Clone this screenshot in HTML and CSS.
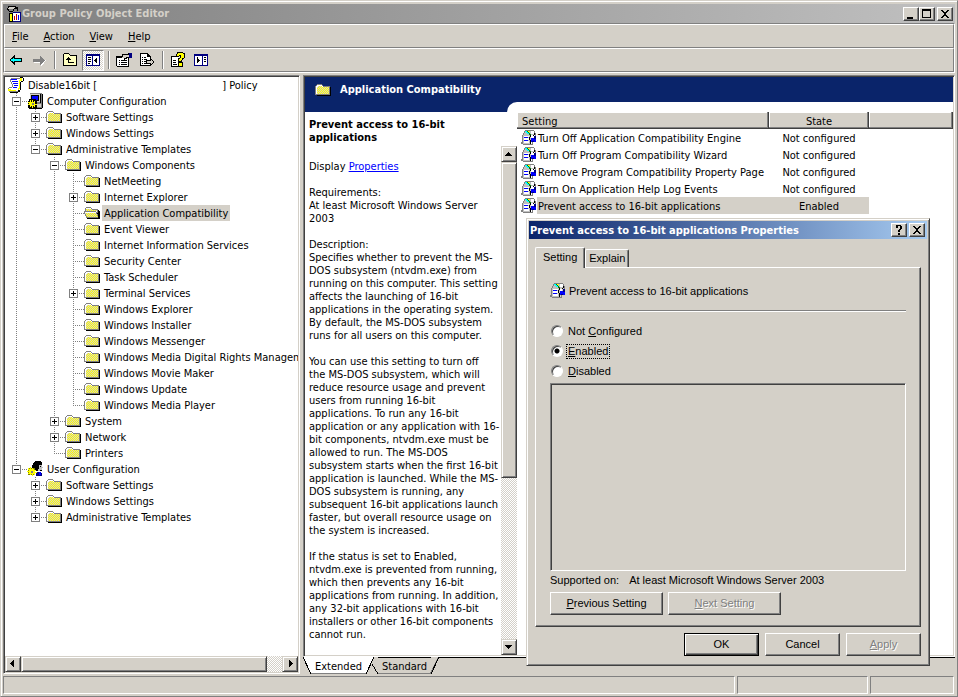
FILE: index.html
```html
<!DOCTYPE html>
<html lang="en">
<head>
    <meta charset="UTF-8">
    <meta name="viewport" content="width=device-width, initial-scale=1.0">
    <title>Group Policy Object Editor</title>
    <link rel="stylesheet" href="styles.css">
</head>
<body>
    <!-- Icon set -->
    <svg class="defs" aria-hidden="true">
        <defs>
            <pattern id="dither" width="2" height="2" patternUnits="userSpaceOnUse">
                <rect width="2" height="2" fill="#d4d0c8"/>
                <rect width="1" height="1" fill="#ff0"/>
                <rect x="1" y="1" width="1" height="1" fill="#ff0"/>
            </pattern>
            <symbol id="folder" viewBox="0 0 16 16">
                <path fill="#000" d="M2 13h14v1H2zM15 5h1v9h-1z"/>
                <path fill="#808080" d="M0 4h1v9H0zM1 3h1v1H1zM2 2h5v1H2zM7 3h1v1H7zM8 4h7v1H8zM14 4h1v9h-1zM1 12h14v1H1z"/>
                <path fill="#fff" d="M1 4h1v8H1zM2 3h5v1H2zM2 4h6v1H2zM2 5h12v1H2z"/>
                <path fill="url(#dither)" d="M2 5h12v7H2zM3 4h4v1H3z"/>
            </symbol>
            <symbol id="folder-open" viewBox="0 0 16 16">
                <path fill="#808080" d="M2 2h5v1H2zM1 3h1v3H1zM7 3h1v1H7zM8 4h6v1H8zM0 6h12v1H0zM13 5h1v3h-1zM0 7h1v2H0zM1 9h1v2H1zM2 11h1v2H2zM3 12h12v1H3zM12 7h1v2h-1zM13 9h1v2h-1z"/>
                <path fill="url(#dither)" d="M2 3h5v3H2zM7 4h1v2H7zM8 5h5v1H8zM1 7h11v2H1zM2 9h11v2H2zM3 11h11v1H3z"/>
                <path fill="#fff" d="M2 3h5v1H2zM1 7h11v1H1z"/>
                <path fill="#000" d="M3 13h13v1H3zM15 6h1v8h-1zM14 5h1v8h-1zM13 8h1v1h-1z"/>
            </symbol>
            <symbol id="policy" viewBox="0 0 16 16">
                <path fill="#808080" d="M3 1h9v1H3zM2 2h1v3H2zM3 5h1v2H3zM4 7h1v3H4zM1 10h3v1H1zM0 11h1v3H0zM1 14h9v1H1z"/>
                <path fill="#fff" d="M3 2h8v3H3zM4 5h7v2H4zM5 7h6v4H5zM1 11h9v3H1z"/>
                <path fill="#00f" d="M3 2h6v1H3zM4 4h6v1H4zM5 6h5v1H5zM6 8h4v1H6zM5 10h4v1H5z"/>
                <path fill="#000" d="M12 0h3v1h-3zM15 1h1v3h-1zM13 4h2v1h-2zM12 5h1v8h-1zM10 13h2v2h-2zM2 15h8v1H2z"/>
                <path fill="#ff0" d="M12 1h2v3h-2zM11 3h1v9h-1zM10 11h1v2h-1zM0 12h3v2H0zM3 13h5v1H3z"/>
            </symbol>
            <symbol id="computer" viewBox="0 0 16 16">
                <path fill="#808080" d="M3 0h12v10H3zM1 10h14v5H1z"/>
                <path fill="#d4d0c8" d="M3 1h10v8H3zM2 11h12v3H2z"/>
                <path fill="#000" d="M4 2h8v6H4zM13 1h1v9h-1zM15 1h1v14h-1zM2 15h13v1H2z"/>
                <path fill="#00f" d="M5 3h6v4H5z"/>
                <path fill="#000" d="M2 6h7v1h1v8H1V8h1z"/>
                <path fill="#ff0" d="M3 7h1v2h1V7h1v2h1V8h1v2H8v1h2v1H8v2H7v-1H6v2H5v-2H4v1H3v-2H1v-1h1v-1H1V9h2z"/>
                <path fill="#808080" d="M5 10h2v2H5z"/>
            </symbol>
            <symbol id="user" viewBox="0 0 16 16">
                <path fill="#000" d="M7 1h1V0h6v1h1v3h-2v1h-1v3h-1v2H6V8H5V4h1V2h1z"/>
                <path fill="#c0c0c0" d="M12 4h3v2h1v1h-1v3h-4V8h1z"/>
                <path fill="#000" d="M13 5h1v1h-1zM13 9h2v1h-2z"/>
                <path fill="#000080" d="M10 11h4v1h1v3H9v-3h1z"/>
                <path fill="#00f" d="M12 11h2v3h-2z"/>
                <path fill="#808000" d="M1 7h7v7H1z"/>
                <path fill="#ff0" d="M1 7h1v1h1V6h1v2h1V7h1v1h1v1h2v1H8v1h2v1H8v2H7v-1H6v2H5v-2H4v1H3v-1H1v-1h1v-1H0v-1h2V9H1z"/>
                <path fill="#808080" d="M4 10h2v2H4z"/>
            </symbol>
            <symbol id="setting" viewBox="0 0 16 16">
                <path fill="#808080" d="M4 0h9v1H4zM13 1h1v2h-1zM3 1h1v2H3zM2 3h1v2H2zM1 5h1v2H1zM0 12h2v2H0zM1 7h1v5H1zM2 14h10v1H2zM14 3h1v3h-1zM11 12h1v2h-1z"/>
                <path fill="#c0c0c0" d="M4 1h9v4H4zM3 3h2v3H3zM2 5h8v9H2z"/>
                <path fill="#fff" d="M10 1h3v3h-3zM3 6h5v1H3zM3 8h5v2H3zM3 11h5v2H3z"/>
                <path fill="#0ff" d="M4 1h2v1H4zM5 2h2v1H5zM6 3h2v1H6z"/>
                <path fill="#008000" d="M6 1h1v1H6zM7 2h1v1H7zM8 3h1v2H8zM9 4h1v1H9z"/>
                <path fill="#ff0" d="M7 1h2v1H7z"/>
                <path fill="#00f" d="M3 7h4v1H3zM3 10h4v1H3z"/>
                <path fill="#000" d="M9 5h1v2H9zM8 7h1v3H8zM9 10h1v4H9zM10 8h1v2h-1zM13 3h1v2h-1zM12 5h1v1h-1z"/>
                <path fill="#00f" d="M10 8h5v4h-5z"/>
                <path fill="#000080" d="M13 6h2v3h-2zM11 11h2v1h-2z"/>
                <path fill="#fff" d="M10 6h2v2h-2z"/>
            </symbol>
            <symbol id="app" viewBox="0 0 16 16">
                <path fill="#000" d="M2 0h8v1h2v4h-1V3H8v2H2V4H1V2h1zM3 5h4v1H3z"/>
                <path fill="#d4d0c8" d="M3 1h6v1H3zM2 2h6v1H2z"/>
                <path fill="#808080" d="M3 3h4v2H3zM4 6h2v2H4z"/>
                <path fill="#000" d="M3 7h4v9H3z"/>
                <path fill="#ff0" d="M4 8h2v7H4z"/>
                <path fill="#fff" d="M7 7h8v8H7z"/>
                <path fill="#000080" d="M7 6h8v1H7zM14 7h1v9h-1zM7 15h8v1H7z"/>
                <path fill="#c00000" d="M8 10h1v4H8zM10 8h1v6h-1z"/>
                <path fill="#00f" d="M12 9h1v5h-1z"/>
            </symbol>
        </defs>
    </svg>

    <div class="window">
        <header class="titlebar">
            <svg class="icon"><use href="#app"/></svg>
            <h1>Group Policy Object Editor</h1>
            <button class="caption" aria-label="Minimize"><svg viewBox="0 0 12 10"><path d="M2 8h6v2H2z"/></svg></button>
            <button class="caption" aria-label="Maximize"><svg viewBox="0 0 12 10"><path fill-rule="evenodd" d="M1 0h9v9H1zM2 2h7v6H2z"/></svg></button>
            <button class="caption close" aria-label="Close"><svg viewBox="0 0 12 10"><path d="M2 1h2v1h1v1h2V2h1V1h2v1H9v1H8v1H7v2h1v1h1v1h1v1H8V8H7V7H5v1H4v1H2V8h1V7h1V6h1V4H4V3H3V2H2z"/></svg></button>
        </header>

        <div class="bars">
            <nav class="menu">
                <button><u>F</u>ile</button>
                <button><u>A</u>ction</button>
                <button><u>V</u>iew</button>
                <button><u>H</u>elp</button>
            </nav>
            <div class="toolbar">
                <button class="tool" aria-label="Back"><svg viewBox="0 0 16 16"><path d="M2 7h1V6h1V5h1V4h1V3h1v3h7v4H7v3H6v-1H5v-1H4v-1H3V9H2z"/><path fill="#0ff" d="M3 8V7h2V6h1v1h7v2H6v1H5V9H3z"/></svg></button>
                <button class="tool" aria-label="Forward"><svg viewBox="0 0 16 16"><path fill="#fff" d="M3 8h7v3H3zM10 12l4-4h1l-4 6h-1z"/><path fill="#808080" d="M2 7h7V4h1v1h1v1h1v1h1v1h1v1h-1v1h-1v1h-1v1h-1v1H9v-3H2z"/></svg></button>
                <span class="sep"></span>
                <button class="tool" aria-label="Up one level"><svg viewBox="0 0 16 16"><path fill="#000" d="M2 1h5v1h1v1h7v11H1V2h1z"/><path fill="#ffffc0" d="M2 2h5v1h1v1h6v9H2z"/><path fill="#000" d="M6 5h1v1h1v1h1v1H7v2h5v1H6V8H4V7h1V6h1z"/></svg></button>
                <button class="tool pressed" aria-label="Show tree"><svg viewBox="0 0 16 16"><path fill="#000080" d="M1 2h14v12H1z"/><path fill="#fff" d="M2 4h5v9H2zM8 4h6v9H8z"/><path fill="#000" d="M3 5h3v1H3zM3 7h3v1H3zM3 9h3v1H3zM3 11h2v1H3zM12 5v6h-1v-1h-1V9H9V8h1V7h1V6z"/></svg></button>
                <span class="sep"></span>
                <button class="tool" aria-label="Properties"><svg viewBox="0 0 16 16"><path d="M0 4h8v1h5v10H1v-1H0z"/><path fill="#fff" d="M1 6h11v8H1z"/><path d="M3 8h1v1H3zM5 8h6v1H5zM3 10h1v1H3zM5 10h6v1H5zM3 12h1v1H3zM5 12h6v1H5z"/><path d="M6 2h6V1h2v5h-3v1H9v1H8V6H5V4h1z"/><path fill="#d4d0c8" d="M7 3h6v2H7zM6 5h4v1H6z"/><path fill="#000080" d="M13 1h3v5h-3z"/></svg></button>
                <button class="tool" aria-label="Export list"><svg viewBox="0 0 16 16"><path d="M1 1h8v1h1v1h1v1h1v10H1z"/><path fill="#fff" d="M2 2h6v3h3v8H2z"/><path d="M8 2h1v2h2v1H8zM3 5h1v1H3zM5 5h2v1H5zM3 7h1v1H3zM5 7h3v1H5zM3 9h1v1H3zM5 9h2v1H5zM3 11h1v1H3zM5 11h3v1H5zM11 6h1v1h1v1h1v1h1v2h-1v1h-1v1h-1v1h-1v-2H7V8h4z"/><path fill="#d4d0c8" d="M8 9h4V8h1v1h1v2h-1v1h-1v-1H8z"/></svg></button>
                <span class="sep"></span>
                <button class="tool" aria-label="Help"><svg viewBox="0 0 16 16"><path d="M1 4h8v11H1z"/><path fill="#fff" d="M2 5h7v9H2z"/><path d="M3 8h3v1H3zM3 10h3v1H3zM3 12h4v1H3zM7 0h6v1h2v5h-1v1h-1v1h-1v2H8V6h2V4H9v1H6V2h1zM8 10h5v5H8z"/><path fill="#ff0" d="M8 1h5v1h1v4h-2v2h-1v1H9V7h1V6h1V3H9v1H7V2h1zM9 11h3v3H9z"/></svg></button>
                <button class="tool" aria-label="Show action pane"><svg viewBox="0 0 16 16"><path fill="#000080" d="M1 2h14v12H1z"/><path fill="#fff" d="M2 4h7v9H2zM10 4h4v9h-4z"/><path fill="#000" d="M11 5h2v1h-2zM11 7h2v1h-2zM11 9h2v1h-2zM4 5v6h1v-1h1V9h1V8H6V7H5V6z"/></svg></button>
            </div>
        </div>

        <main class="main">
            <section class="tree-pane">
                <div class="tree">
                    <div class="row"><svg class="icon"><use href="#policy"/></svg><span class="label root">Disable16bit [<i class="blank"></i>] Policy</span></div>
                    <ul>
                        <li>
                            <div class="row"><button class="exp" aria-label="Collapse"></button><svg class="icon"><use href="#computer"/></svg><span class="label">Computer Configuration</span></div>
                            <ul>
                                <li><div class="row"><button class="exp plus" aria-label="Expand"></button><svg class="icon"><use href="#folder"/></svg><span class="label">Software Settings</span></div></li>
                                <li><div class="row"><button class="exp plus" aria-label="Expand"></button><svg class="icon"><use href="#folder"/></svg><span class="label">Windows Settings</span></div></li>
                                <li>
                                    <div class="row"><button class="exp" aria-label="Collapse"></button><svg class="icon"><use href="#folder"/></svg><span class="label">Administrative Templates</span></div>
                                    <ul>
                                        <li>
                                            <div class="row"><button class="exp" aria-label="Collapse"></button><svg class="icon"><use href="#folder"/></svg><span class="label">Windows Components</span></div>
                                            <ul>
                                                <li><div class="row leaf"><svg class="icon"><use href="#folder"/></svg><span class="label">NetMeeting</span></div></li>
                                                <li><div class="row"><button class="exp plus" aria-label="Expand"></button><svg class="icon"><use href="#folder"/></svg><span class="label">Internet Explorer</span></div></li>
                                                <li><div class="row leaf"><svg class="icon"><use href="#folder-open"/></svg><span class="label selected">Application Compatibility</span></div></li>
                                                <li><div class="row leaf"><svg class="icon"><use href="#folder"/></svg><span class="label">Event Viewer</span></div></li>
                                                <li><div class="row leaf"><svg class="icon"><use href="#folder"/></svg><span class="label">Internet Information Services</span></div></li>
                                                <li><div class="row leaf"><svg class="icon"><use href="#folder"/></svg><span class="label">Security Center</span></div></li>
                                                <li><div class="row leaf"><svg class="icon"><use href="#folder"/></svg><span class="label">Task Scheduler</span></div></li>
                                                <li><div class="row"><button class="exp plus" aria-label="Expand"></button><svg class="icon"><use href="#folder"/></svg><span class="label">Terminal Services</span></div></li>
                                                <li><div class="row leaf"><svg class="icon"><use href="#folder"/></svg><span class="label">Windows Explorer</span></div></li>
                                                <li><div class="row leaf"><svg class="icon"><use href="#folder"/></svg><span class="label">Windows Installer</span></div></li>
                                                <li><div class="row leaf"><svg class="icon"><use href="#folder"/></svg><span class="label">Windows Messenger</span></div></li>
                                                <li><div class="row leaf"><svg class="icon"><use href="#folder"/></svg><span class="label">Windows Media Digital Rights Management</span></div></li>
                                                <li><div class="row leaf"><svg class="icon"><use href="#folder"/></svg><span class="label">Windows Movie Maker</span></div></li>
                                                <li><div class="row leaf"><svg class="icon"><use href="#folder"/></svg><span class="label">Windows Update</span></div></li>
                                                <li><div class="row leaf"><svg class="icon"><use href="#folder"/></svg><span class="label">Windows Media Player</span></div></li>
                                            </ul>
                                        </li>
                                        <li><div class="row"><button class="exp plus" aria-label="Expand"></button><svg class="icon"><use href="#folder"/></svg><span class="label">System</span></div></li>
                                        <li><div class="row"><button class="exp plus" aria-label="Expand"></button><svg class="icon"><use href="#folder"/></svg><span class="label">Network</span></div></li>
                                        <li><div class="row leaf"><svg class="icon"><use href="#folder"/></svg><span class="label">Printers</span></div></li>
                                    </ul>
                                </li>
                            </ul>
                        </li>
                        <li>
                            <div class="row"><button class="exp" aria-label="Collapse"></button><svg class="icon"><use href="#user"/></svg><span class="label">User Configuration</span></div>
                            <ul>
                                <li><div class="row"><button class="exp plus" aria-label="Expand"></button><svg class="icon"><use href="#folder"/></svg><span class="label">Software Settings</span></div></li>
                                <li><div class="row"><button class="exp plus" aria-label="Expand"></button><svg class="icon"><use href="#folder"/></svg><span class="label">Windows Settings</span></div></li>
                                <li><div class="row"><button class="exp plus" aria-label="Expand"></button><svg class="icon"><use href="#folder"/></svg><span class="label">Administrative Templates</span></div></li>
                            </ul>
                        </li>
                    </ul>
                </div>
                <div class="scroll horizontal">
                    <button class="arrow" aria-label="Scroll left"><svg viewBox="0 0 8 8"><path d="M5 0v7H4V6H3V5H2V4H1V3h1V2h1V1h1V0z"/></svg></button>
                    <div class="thumb"></div>
                    <button class="arrow" aria-label="Scroll right"><svg viewBox="0 0 8 8"><path d="M3 0v7h1V6h1V5h1V4h1V3H6V2H5V1H4V0z"/></svg></button>
                </div>
            </section>

            <section class="result-pane">
                <div class="result">
                    <div class="banner">
                        <svg class="icon"><use href="#folder"/></svg>
                        <h2>Application Compatibility</h2>
                    </div>
                    <div class="curve"><div></div></div>
                    <div class="columns">
                        <div class="task">
                            <h3>Prevent access to 16-bit<br>applications</h3>
                            <div class="task-body">
                                <div class="task-text">
                                    <p>Display <a href="#properties">Properties</a></p>
                                    <p>Requirements:<br>At least Microsoft Windows Server<br>2003</p>
                                    <p>Description:<br>
                                    Specifies whether to prevent the MS-<br>
                                    DOS subsystem (ntvdm.exe) from<br>
                                    running on this computer. This setting<br>
                                    affects the launching of 16-bit<br>
                                    applications in the operating system.<br>
                                    By default, the MS-DOS subsystem<br>
                                    runs for all users on this computer.</p>
                                    <p>You can use this setting to turn off<br>
                                    the MS-DOS subsystem, which will<br>
                                    reduce resource usage and prevent<br>
                                    users from running 16-bit<br>
                                    applications. To run any 16-bit<br>
                                    application or any application with 16-<br>
                                    bit components, ntvdm.exe must be<br>
                                    allowed to run. The MS-DOS<br>
                                    subsystem starts when the first 16-bit<br>
                                    application is launched. While the MS-<br>
                                    DOS subsystem is running, any<br>
                                    subsequent 16-bit applications launch<br>
                                    faster, but overall resource usage on<br>
                                    the system is increased.</p>
                                    <p>If the status is set to Enabled,<br>
                                    ntvdm.exe is prevented from running,<br>
                                    which then prevents any 16-bit<br>
                                    applications from running. In addition,<br>
                                    any 32-bit applications with 16-bit<br>
                                    installers or other 16-bit components<br>
                                    cannot run.</p>
                                </div>
                                <div class="scroll vertical">
                                    <button class="arrow" aria-label="Scroll up"><svg viewBox="0 0 8 8"><path d="M0 6h7V5H6V4H5V3H4V2H3v1H2v1H1v1H0z"/></svg></button>
                                    <div class="thumb"></div>
                                    <button class="arrow" aria-label="Scroll down"><svg viewBox="0 0 8 8"><path d="M0 2h7v1H6v1H5v1H4v1H3V5H2V4H1V3H0z"/></svg></button>
                                </div>
                            </div>
                        </div>
                        <div class="list">
                            <table>
                                <colgroup><col class="col-setting"><col class="col-state"><col></colgroup>
                                <thead>
                                    <tr><th>Setting</th><th class="state">State</th><th></th></tr>
                                </thead>
                                <tbody>
                                    <tr><td><div class="cell"><svg class="icon"><use href="#setting"/></svg><span>Turn Off Application Compatibility Engine</span></div></td><td class="state">Not configured</td><td></td></tr>
                                    <tr><td><div class="cell"><svg class="icon"><use href="#setting"/></svg><span>Turn Off Program Compatibility Wizard</span></div></td><td class="state">Not configured</td><td></td></tr>
                                    <tr><td><div class="cell"><svg class="icon"><use href="#setting"/></svg><span>Remove Program Compatibility Property Page</span></div></td><td class="state">Not configured</td><td></td></tr>
                                    <tr><td><div class="cell"><svg class="icon"><use href="#setting"/></svg><span>Turn On Application Help Log Events</span></div></td><td class="state">Not configured</td><td></td></tr>
                                    <tr class="current"><td><div class="cell"><svg class="icon"><use href="#setting"/></svg><span>Prevent access to 16-bit applications</span></div></td><td class="state">Enabled</td><td></td></tr>
                                </tbody>
                            </table>
                        </div>
                    </div>
                </div>
                <div class="view-tabs">
                    <button class="view-tab active">
                        <svg viewBox="0 0 8 17"><path fill="#fff" d="M0 0h8v17z"/><path class="line" d="M0 0l8 17"/></svg>
                        <span>Extended</span>
                        <svg viewBox="0 0 8 17"><path fill="#fff" d="M0 0h8L0 17z"/><path class="line" d="M8 0L0 17"/></svg>
                    </button>
                    <button class="view-tab">
                        <svg class="short" viewBox="0 0 4 17"><path class="line" d="M-2 7l6 10"/></svg>
                        <span>Standard</span>
                        <svg viewBox="0 0 8 17"><path class="shade" d="M7 1L-1 17"/><path class="line" d="M8 0L0 17"/></svg>
                    </button>
                    <div class="rest"></div>
                </div>
            </section>
        </main>

        <footer class="status">
            <div class="wide"></div>
            <div class="mid"></div>
            <div class="small"></div>
        </footer>
    </div>

    <!-- Properties dialog -->
    <div class="dialog" id="properties" role="dialog" aria-labelledby="dialog-title">
        <header class="titlebar">
            <h1 id="dialog-title">Prevent access to 16-bit applications Properties</h1>
            <button class="caption" aria-label="What's this"><svg viewBox="0 0 12 10"><path d="M3 0h5v1h1v3H8v1H7v2H5V5h1V4h1V1H5v2H3V1zM5 8h2v2H5z"/></svg></button>
            <button class="caption close" aria-label="Close"><svg viewBox="0 0 12 10"><path d="M2 1h2v1h1v1h2V2h1V1h2v1H9v1H8v1H7v2h1v1h1v1h1v1H8V8H7V7H5v1H4v1H2V8h1V7h1V6h1V4H4V3H3V2H2z"/></svg></button>
        </header>
        <div class="dialog-body">
            <div class="tabs">
                <button class="tab active">Setting</button>
                <button class="tab">Explain</button>
            </div>
            <div class="page">
                <div class="heading"><svg class="icon"><use href="#setting"/></svg><span>Prevent access to 16-bit applications</span></div>
                <hr>
                <div class="options">
                    <div class="option"><input type="radio" name="state" id="not-configured"><label for="not-configured">Not <u>C</u>onfigured</label></div>
                    <div class="option"><input type="radio" name="state" id="enabled" checked><label for="enabled" class="focus"><u>E</u>nabled</label></div>
                    <div class="option"><input type="radio" name="state" id="disabled"><label for="disabled"><u>D</u>isabled</label></div>
                </div>
                <div class="box"></div>
                <div class="supported"><span>Supported on:</span><span>At least Microsoft Windows Server 2003</span></div>
                <div class="step">
                    <button class="btn"><u>P</u>revious Setting</button>
                    <button class="btn" disabled><u>N</u>ext Setting</button>
                </div>
            </div>
            <div class="actions">
                <button class="btn default">OK</button>
                <button class="btn">Cancel</button>
                <button class="btn" disabled><u>A</u>pply</button>
            </div>
        </div>
    </div>
</body>
</html>
```
FILE: styles.css
```css
* {
    box-sizing: border-box;
}
body {
    margin: 0;
    background-color: #d4d0c8;
    font-family: Tahoma, "DejaVu Sans Condensed", "DejaVu Sans", sans-serif;
    font-size: 11px;
    line-height: 13px;
    color: #000;
}
h1, h2, h3, p, ul {
    margin: 0;
    padding: 0;
    font-size: 11px;
}
ul {
    list-style: none;
}
button {
    margin: 0;
    padding: 0;
    border: none;
    background: none;
    color: inherit;
    font: inherit;
}
svg {
    display: block;
    flex: none;
    shape-rendering: crispEdges;
}
.defs {
    position: absolute;
    width: 0;
    height: 0;
}
.icon {
    width: 16px;
    height: 16px;
}
.window {
    display: flex;
    flex-direction: column;
    height: 100vh;
    padding: 3px 2px 2px 2px;
    border: 1px solid;
    border-color: #d4d0c8 #808080 #808080 #d4d0c8;
    box-shadow: inset 1px 1px #fff;
}

/* Title bar, shared with the dialog */
.titlebar {
    display: flex;
    align-items: center;
    height: 19px;
    padding: 0 2px 0 3px;
    background: linear-gradient(to right, #808080, #c0c0c0);
    color: #d4d0c8;
}
.titlebar h1 {
    flex: 1;
    white-space: nowrap;
}
.caption {
    display: flex;
    align-items: center;
    justify-content: center;
    width: 16px;
    height: 14px;
    background-color: #d4d0c8;
    border: 1px solid;
    border-color: #fff #404040 #404040 #fff;
    box-shadow: inset -1px -1px #808080;
    color: #000;
}
.caption svg {
    width: 12px;
    height: 10px;
}
.caption.close {
    margin-left: 2px;
}

/* Menu and toolbar */
.bars {
    border: 1px solid;
    border-color: #808080 #fff #fff #808080;
}
.menu,
.toolbar {
    display: flex;
    align-items: center;
    height: 24px;
    border: 1px solid;
    border-color: #fff #808080 #808080 #fff;
}
.menu {
    gap: 15px;
    padding-left: 7px;
}
.toolbar {
    gap: 7px;
    padding-left: 3px;
}
.tool {
    width: 16px;
    height: 16px;
}
.tool svg {
    width: 16px;
    height: 16px;
}
.tool.pressed {
    width: 22px;
    height: 21px;
    margin: 0 -3px;
    padding: 1px 2px;
    border: 1px solid;
    border-color: #808080 #fff #fff #808080;
    background: repeating-conic-gradient(#fff 0 25%, #d4d0c8 0 50%) 0 0 / 2px 2px;
}
.sep {
    width: 2px;
    height: 18px;
    margin-right: -1px;
    border-left: 1px solid #808080;
    border-right: 1px solid #fff;
}

/* Panes */
.main {
    flex: 1;
    display: flex;
    gap: 3px;
    min-height: 0;
    padding: 2px 0 1px;
}
.tree-pane,
.result {
    border: 1px solid;
    border-color: #808080 #fff #fff #808080;
    box-shadow: inset 1px 1px #404040, inset -1px -1px #d4d0c8;
    padding: 1px;
    background-color: #fff;
}
.tree-pane {
    display: flex;
    flex-direction: column;
    flex: none;
    width: 297px;
}
.tree {
    flex: 1;
    overflow: hidden;
    padding-left: 3px;
}
.tree ul ul {
    margin-left: 19px;
}
.tree li {
    background: repeating-linear-gradient(#808080 0 1px, transparent 1px 2px) 8px 0 / 1px 100% no-repeat;
}
.tree li:last-child {
    background-size: 1px 8px;
}
.row {
    display: flex;
    align-items: center;
    height: 16px;
    white-space: nowrap;
}
li > .row {
    background: repeating-linear-gradient(to right, #808080 0 1px, transparent 1px 2px) 8px 8px / 11px 1px no-repeat;
}
.leaf {
    padding-left: 19px;
}
.exp {
    flex: none;
    width: 9px;
    height: 9px;
    margin: 0 6px 0 4px;
    border: 1px solid #808080;
    background: linear-gradient(#000, #000) center / 5px 1px no-repeat, #fff;
}
.exp.plus {
    background: linear-gradient(#000, #000) center / 5px 1px no-repeat, linear-gradient(#000, #000) center / 1px 5px no-repeat, #fff;
}
.label {
    margin-left: 2px;
    padding: 2px 2px 1px;
}
.label.selected {
    background-color: #d4d0c8;
}
.blank {
    display: inline-block;
    width: 125px;
}

/* Scroll bars */
.scroll {
    display: flex;
    flex: none;
    background: repeating-conic-gradient(#fff 0 25%, #d4d0c8 0 50%) 0 0 / 2px 2px;
}
.scroll.horizontal {
    height: 16px;
}
.scroll.vertical {
    flex-direction: column;
    width: 16px;
}
.arrow,
.thumb {
    background-color: #d4d0c8;
    border: 1px solid;
    border-color: #d4d0c8 #404040 #404040 #d4d0c8;
    box-shadow: inset 1px 1px #fff, inset -1px -1px #808080;
}
.arrow {
    display: flex;
    align-items: center;
    justify-content: center;
    flex: none;
    width: 16px;
    height: 16px;
}
.arrow:last-child {
    margin: auto 0 0 auto;
}
.arrow svg {
    width: 8px;
    height: 8px;
}
.horizontal .thumb {
    width: 84%;
}
.vertical .thumb {
    height: 62%;
}

/* Result pane */
.result-pane {
    display: flex;
    flex: 1;
    flex-direction: column;
    min-width: 0;
}
.result {
    flex: 1;
    display: flex;
    flex-direction: column;
    min-height: 0;
}
.banner {
    display: flex;
    align-items: center;
    gap: 9px;
    height: 25px;
    padding-left: 10px;
    background-color: #0a246a;
    color: #fff;
}
.curve {
    height: 10px;
    padding-left: 202px;
    background-color: #0a246a;
}
.curve div {
    height: 10px;
    background-color: #fff;
    border-top-left-radius: 10px;
}
.columns {
    display: flex;
    flex: 1;
    min-height: 0;
}
.task {
    display: flex;
    flex-direction: column;
    flex: none;
    width: 212px;
}
.task h3 {
    padding: 6px 0 2px 4px;
}
.task-body {
    display: flex;
    flex: 1;
    min-height: 0;
}
.task-text {
    flex: 1;
    overflow: hidden;
    padding: 14px 0 0 4px;
    white-space: nowrap;
}
.task-text p {
    margin-bottom: 13px;
}
a {
    color: #00f;
}
.list {
    flex: 1;
    overflow: hidden;
}
table {
    width: 100%;
    table-layout: fixed;
    border-collapse: collapse;
}
.col-setting {
    width: 252px;
}
.col-state {
    width: 100px;
}
th {
    height: 17px;
    padding: 2px 0 0 5px;
    background-color: #d4d0c8;
    box-shadow: inset -1px -1px #404040, inset -2px -2px #808080, inset 1px 1px #fff;
    font-weight: normal;
    text-align: left;
}
td {
    height: 17px;
    padding: 0;
    white-space: nowrap;
}
th.state,
td.state {
    padding: 2px 0 0;
    text-align: center;
}
.cell {
    display: flex;
    align-items: center;
    padding-left: 4px;
}
.cell span {
    flex: 1;
    padding: 3px 0 1px 1px;
}
.current span,
.current .state {
    background-color: #d4d0c8;
}
.view-tabs {
    display: flex;
    height: 17px;
}
.view-tab {
    display: flex;
    height: 17px;
}
.view-tab svg {
    width: 8px;
    height: 17px;
    overflow: visible;
}
.view-tab .short {
    width: 4px;
}
.view-tab span {
    height: 17px;
    padding: 2px 4px 0;
    border-top: 1px solid #000;
    border-bottom: 1px solid #808080;
}
.view-tab.active span {
    background-color: #fff;
    border-top-color: #fff;
}
.view-tab .line,
.view-tab .shade {
    fill: none;
    stroke: #000;
}
.view-tab .shade {
    stroke: #808080;
}
.rest {
    flex: 1;
    height: 1px;
    background-color: #000;
}

/* Status bar */
.status {
    display: flex;
    gap: 2px;
    height: 19px;
    padding: 1px 1px 0 0;
}
.status div {
    border: 1px solid;
    border-color: #808080 #fff #fff #808080;
}
.status .wide {
    flex: 1;
}
.status .mid {
    width: 131px;
}
.status .small {
    width: 84px;
}

/* Dialog */
.dialog {
    position: absolute;
    top: 218px;
    left: 526px;
    width: 404px;
    padding: 2px;
    background-color: #d4d0c8;
    border: 1px solid;
    border-color: #d4d0c8 #404040 #404040 #d4d0c8;
    box-shadow: inset 1px 1px #fff, inset -1px -1px #808080;
    font-family: "Liberation Sans", Arial, sans-serif;
}
.dialog .titlebar {
    height: 18px;
    padding-left: 1px;
    background: linear-gradient(to right, #0a246a, #a6caf0);
    color: #fff;
    font-family: Tahoma, "DejaVu Sans Condensed", "DejaVu Sans", sans-serif;
}
.dialog-body {
    padding: 8px 6px 7px;
}
.tabs {
    display: flex;
    align-items: flex-end;
}
.tab {
    height: 18px;
    padding: 0 3px;
    border: 1px solid;
    border-color: #fff #404040 transparent #fff;
    border-bottom: none;
    border-radius: 2px 2px 0 0;
    box-shadow: inset -1px 0 #808080;
}
.tab.active {
    z-index: 1;
    height: 21px;
    margin-bottom: -1px;
    padding: 0 7px 2px;
    background-color: #d4d0c8;
}
.page {
    padding: 14px 14px 11px;
    border: 1px solid;
    border-color: #fff #404040 #404040 #fff;
    box-shadow: inset -1px -1px #808080;
}
.heading {
    display: flex;
    align-items: center;
    gap: 3px;
    height: 18px;
}
hr {
    height: 2px;
    margin: 10px 0 9px;
    border: none;
    border-top: 1px solid #808080;
    border-bottom: 1px solid #fff;
}
.option {
    display: flex;
    align-items: center;
    gap: 3px;
    height: 20px;
}
.option input {
    appearance: none;
    width: 12px;
    height: 12px;
    margin: 0 0 0 1px;
    border: 1px solid;
    border-color: #808080 #fff #fff #808080;
    border-radius: 50%;
    background-color: #fff;
    box-shadow: inset 1px 1px #404040;
}
.option input:checked {
    background: radial-gradient(circle, #000 2px, #fff 3px);
}
.option label {
    padding: 0 1px;
    border: 1px solid transparent;
}
.option label.focus {
    border: 1px dotted #000;
}
.box {
    height: 188px;
    margin-top: 2px;
    border: 1px solid;
    border-color: #808080 #fff #fff #808080;
    box-shadow: inset 1px 1px #404040;
}
.supported {
    display: flex;
    gap: 10px;
    padding: 3px 0 5px;
}
.step {
    display: flex;
    gap: 5px;
}
.actions {
    display: flex;
    gap: 6px;
    justify-content: flex-end;
    margin-top: 6px;
}
.btn {
    width: 75px;
    height: 23px;
    background-color: #d4d0c8;
    border: 1px solid;
    border-color: #fff #404040 #404040 #fff;
    box-shadow: inset -1px -1px #808080;
}
.step .btn {
    width: 113px;
}
.btn.default {
    border-color: #000;
    box-shadow: inset 1px 1px #fff, inset -1px -1px #404040, inset -2px -2px #808080;
}
.btn:disabled {
    color: #808080;
    text-shadow: 1px 1px #fff;
}
```
